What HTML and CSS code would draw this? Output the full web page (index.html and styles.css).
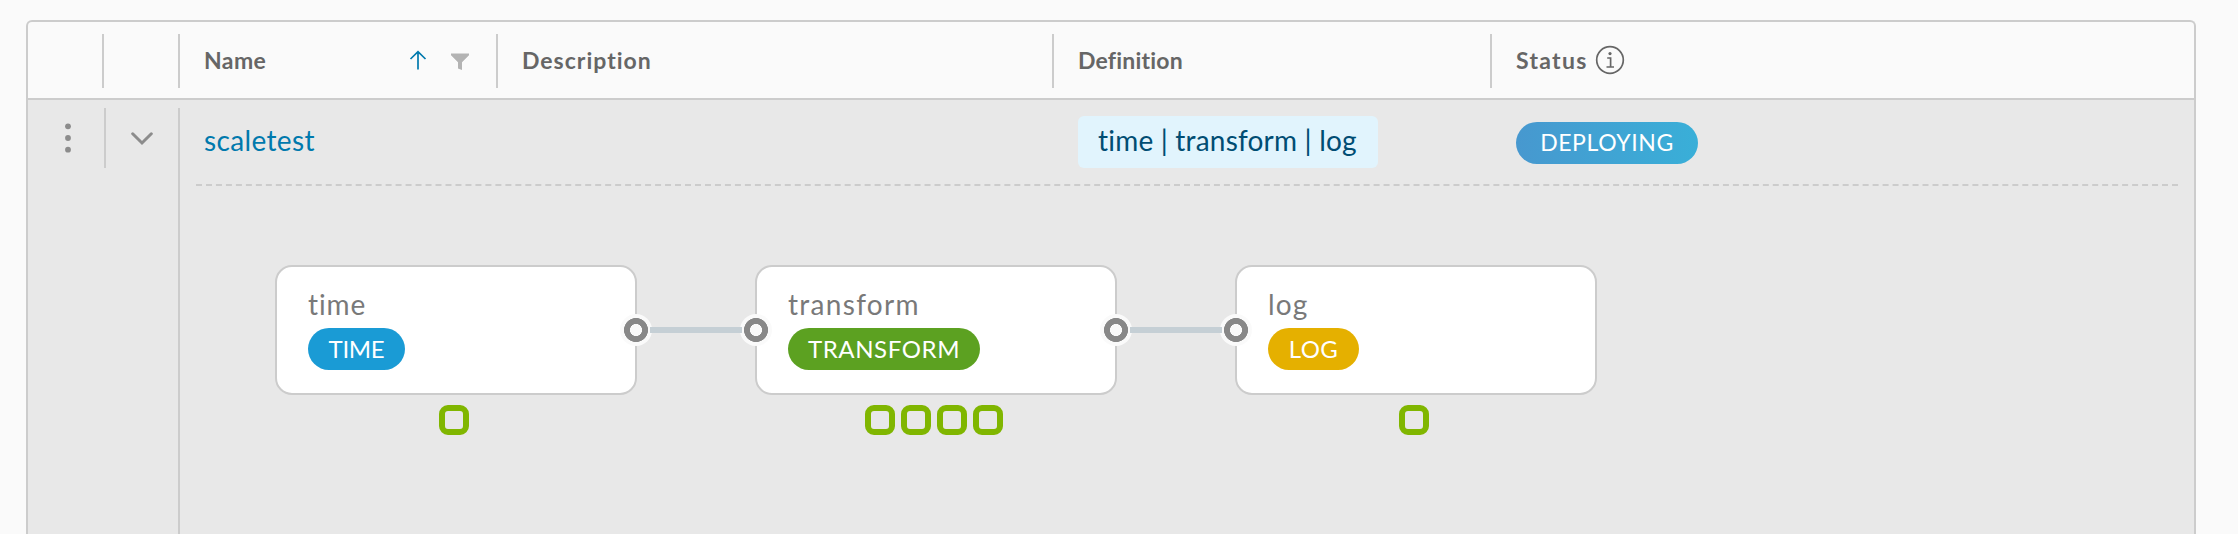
FILE: index.html
```html
<!DOCTYPE html>
<html lang="en">
<head>
<meta charset="utf-8">
<title>Streams</title>
<link rel="stylesheet" href="styles.css">
</head>
<body>
<div class="datagrid">
  <div class="header">
    <div class="head-cell actions"></div>
    <div class="head-cell expander"></div>
    <div class="head-cell name">
      <span class="head-text t-name">Name</span>
      <svg class="sort" width="18" height="20" viewBox="0 0 18 20"><path d="M9 19.500V2M1.500 9L9 1.700L16.500 9" fill="none" stroke="#0079ad" stroke-width="1.700"/></svg>
      <svg class="filter" width="18" height="18" viewBox="0 0 18 18"><path d="M0 .5H18V2.200L11 9.200V17L7 15.400V9.200L0 2.200Z" fill="#b3b3b3"/></svg>
    </div>
    <div class="head-cell description"><span class="head-text t-description">Description</span></div>
    <div class="head-cell definition"><span class="head-text t-definition">Definition</span></div>
    <div class="head-cell status">
      <span class="head-text t-status">Status</span>
      <svg class="info" width="30" height="30" viewBox="0 0 30 30"><circle cx="15" cy="15" r="13.300" fill="none" stroke="#666" stroke-width="1.700"/><circle cx="15" cy="8.600" r="1.600" fill="#666"/><path d="M12.200 13H15.600V21.800M11.500 22H19" fill="none" stroke="#666" stroke-width="1.700"/></svg>
    </div>
  </div>
  <div class="body">
    <div class="row-actions">
      <svg width="6" height="30" viewBox="0 0 6 30"><g fill="#8c8c8c"><circle cx="3" cy="3.300" r="2.900"/><circle cx="3" cy="15" r="2.900"/><circle cx="3" cy="26.700" r="2.900"/></g></svg>
    </div>
    <div class="row-expander">
      <svg width="22" height="14" viewBox="0 0 22 14"><path d="M1.700 1.800L11 11L20.300 1.800" fill="none" stroke="#8c8c8c" stroke-width="3" stroke-linecap="round"/></svg>
    </div>
    <div class="row-main">
      <div class="row">
        <a class="stream-name">scaletest</a>
        <span class="dsl">time | transform | log</span>
        <span class="badge deploying">DEPLOYING</span>
      </div>
      <div class="detail">
        <div class="node">
          <div class="card">
            <div class="label l-time">time</div>
            <span class="badge time">TIME</span>
            <i class="port out"></i>
          </div>
          <div class="instances"><i></i></div>
        </div>
        <div class="link"></div>
        <div class="node">
          <div class="card">
            <div class="label l-transform">transform</div>
            <span class="badge transform">TRANSFORM</span>
            <i class="port in"></i><i class="port out"></i>
          </div>
          <div class="instances"><i></i><i></i><i></i><i></i></div>
        </div>
        <div class="link"></div>
        <div class="node">
          <div class="card">
            <div class="label l-log">log</div>
            <span class="badge log">LOG</span>
            <i class="port in"></i>
          </div>
          <div class="instances"><i></i></div>
        </div>
      </div>
    </div>
  </div>
</div>
</body>
</html>
```
FILE: styles.css
```css
* { box-sizing: border-box; }
body {
  margin: 0;
  height: 534px;
  padding: 20px 42px 0 26px;
  overflow: hidden;
  background: #fafafa;
  font-family: Lato, "Open Sans", sans-serif;
  font-variant-ligatures: none;
}
.datagrid {
  height: 514px;
  border: 2px solid #ccc;
  border-bottom: 0;
  border-radius: 6px 6px 0 0;
  overflow: hidden;
}
.header {
  display: flex;
  height: 78px;
  padding: 12px 0 10px;
  border-bottom: 2px solid #ccc;
}
.head-cell {
  display: flex;
  height: 54px;
  border-right: 2px solid #ccc;
  color: #666;
}
.head-text {
  font-size: 23px;
  font-weight: 700;
  line-height: 26px;
  padding-top: 13px;
  white-space: nowrap;
}
.actions { width: 76px; }
.expander { width: 76px; }
.name { width: 318px; padding-left: 24px; }
.description { width: 556px; padding-left: 24px; }
.definition { width: 438px; padding-left: 24px; }
.status { flex: 1; padding-left: 24px; border-right: 0; }
.t-name { width: 205px; letter-spacing: .4px; }
.t-description { letter-spacing: 1px; }
.t-definition { letter-spacing: .2px; }
.t-status { letter-spacing: 1.3px; width: 79px; }
.sort { margin-top: 16px; }
.filter { margin: 19px 0 0 24px; }
.info { margin-top: 11px; }

.body {
  display: flex;
  height: 434px;
  padding-top: 8px;
  background: #e8e8e8;
}
.row-actions {
  width: 78px;
  height: 60px;
  padding: 15px 0 0 37px;
  border-right: 2px solid #ccc;
}
.row-expander {
  width: 74px;
  padding: 22px 0 0 25px;
  border-right: 2px solid #ccc;
}
.row-main { flex: 1; padding: 0 16px; }
.row {
  display: flex;
  height: 78px;
  padding-left: 8px;
  border-bottom: 2px dashed #ccc;
}
.stream-name {
  width: 874px;
  padding-top: 16px;
  color: #0079ad;
  font-size: 28px;
  line-height: 33px;
  letter-spacing: .35px;
}
.dsl {
  width: 300px;
  height: 52px;
  margin: 8px 138px 0 0;
  padding: 8px 0 0 20px;
  border-radius: 6px;
  background: #e1f4fd;
  color: #004d73;
  font-size: 28px;
  line-height: 33px;
  letter-spacing: .2px;
  white-space: nowrap;
}
.badge {
  display: block;
  height: 42px;
  border-radius: 21px;
  color: #fff;
  font-size: 24px;
  line-height: 42px;
  text-align: center;
  white-space: nowrap;
}
.deploying {
  width: 182px;
  margin-top: 14px;
  background: linear-gradient(90deg, #4798cf, #39afd8);
  font-size: 23px;
  line-height: 41px;
  letter-spacing: .6px;
}
.detail { display: flex; padding: 79px 0 0 79px; }
.node { width: 362px; }
.card {
  position: relative;
  height: 130px;
  padding: 21px 0 0 31px;
  border: 2px solid #ccc;
  border-radius: 17px;
  background: #fff;
}
.label {
  height: 40px;
  color: #797979;
  font-size: 28px;
  line-height: 32px;
}
.l-time { letter-spacing: .9px; }
.l-transform { letter-spacing: 1.3px; }
.l-log { letter-spacing: 1.2px; }
.time { width: 97px; background: #1a9bd5; letter-spacing: -.3px; }
.transform { width: 192px; background: #5ca121; letter-spacing: .6px; }
.log { width: 91px; background: #e5b000; letter-spacing: .4px; }
.port {
  position: absolute;
  z-index: 1;
  top: 47px;
  width: 32px;
  height: 32px;
  border-radius: 50%;
  background: radial-gradient(circle, #fafafa 5.700px, #888 6.300px, #888 11.700px, #fafafa 12.300px);
}
.port.out { right: -17px; }
.port.in { left: -17px; }
.link {
  position: relative;
  z-index: 2;
  width: 92px;
  height: 6px;
  margin: 62px 13px 0;
  background: #c5cfd5;
}
.instances {
  display: flex;
  justify-content: center;
  gap: 6px;
  padding: 10px 4px 0 0;
}
.instances i {
  width: 30px;
  height: 30px;
  border: 6px solid #80b600;
  border-radius: 9px;
}
```
